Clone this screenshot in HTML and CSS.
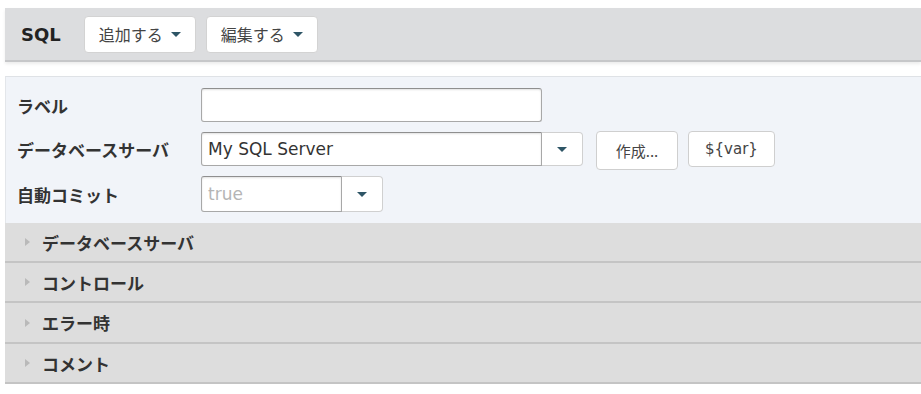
FILE: index.html
```html
<!DOCTYPE html>
<html lang="ja">
<head>
<meta charset="utf-8">
<link rel="stylesheet" href="styles.css">
</head>
<body>
<div class="page">
  <div class="toolbar">
    <span class="title">SQL</span>
    <button class="tbtn">追加する <span class="caret"></span></button>
    <button class="tbtn">編集する <span class="caret"></span></button>
  </div>

  <div class="panel">
    <div class="form">
      <div class="lbl">ラベル</div>
      <div class="ctl"><div class="input wide"></div></div>

      <div class="lbl">データベースサーバ</div>
      <div class="ctl">
        <div class="combo">
          <div class="input wide">My SQL Server</div>
          <div class="drop"><span class="caret"></span></div>
        </div>
        <button class="btn tall">作成...</button>
        <button class="btn">${var}</button>
      </div>

      <div class="lbl">自動コミット</div>
      <div class="ctl">
        <div class="combo">
          <div class="input short placeholder">true</div>
          <div class="drop"><span class="caret"></span></div>
        </div>
      </div>
    </div>
  </div>

  <div class="acc">
    <div class="acc-row"><span class="tri"></span>データベースサーバ</div>
    <div class="acc-row"><span class="tri"></span>コントロール</div>
    <div class="acc-row"><span class="tri"></span>エラー時</div>
    <div class="acc-row"><span class="tri"></span>コメント</div>
  </div>
</div>
</body>
</html>
```

FILE: styles.css
```css
html, body {
  margin: 0;
  padding: 0;
  background: #ffffff;
}
body {
  font-family: "DejaVu Sans", "Noto Sans CJK JP", sans-serif;
  color: #333333;
}
.page {
  padding: 8px 0 0 5px;
}
.toolbar {
  display: flex;
  align-items: center;
  height: 54px;
  box-sizing: border-box;
  background: #dcdddf;
  border-bottom: 2px solid #c6c7c9;
  box-shadow: 0 2px 3px rgba(0,0,0,0.08);
  padding: 0 0 0 16px;
}
.title {
  font-family: "DejaVu Sans", sans-serif;
  font-weight: bold;
  font-size: 18px;
  color: #222;
  margin-right: 22px;
}
.tbtn {
  display: flex;
  align-items: center;
  height: 37px;
  width: 112px;
  justify-content: center;
  gap: 8px;
  background: #fff;
  border: 1px solid #d3d3d3;
  border-radius: 4px;
  font-family: "Noto Sans CJK JP", sans-serif;
  font-size: 16px;
  color: #444;
  margin-left: 1px;
  margin-right: 9px;
  padding: 0;
}
.caret {
  display: inline-block;
  width: 0;
  height: 0;
  border-left: 5px solid transparent;
  border-right: 5px solid transparent;
  border-top: 5px solid #2e5566;
}
.panel {
  margin-top: 14px;
  background: #f1f4f9;
  border-top: 1px solid #dfe2e6;
  border-left: 1px solid #e3e6ea;
  padding: 11px 0 11px 11px;
}
.form {
  display: grid;
  grid-template-columns: 184px 1fr;
  row-gap: 6px;
  align-items: center;
}
.lbl {
  font-family: "Noto Sans CJK JP", sans-serif;
  font-weight: bold;
  font-size: 17px;
  color: #333;
}
.ctl {
  display: flex;
  align-items: center;
  gap: 0;
}
.input {
  box-sizing: border-box;
  height: 34px;
  background: #fff;
  border: 1px solid #a8a8a8;
  border-top-color: #8f8f8f;
  box-shadow: inset 0 1px 2px rgba(0,0,0,0.12);
  border-radius: 3px;
  font-family: "DejaVu Sans", sans-serif;
  font-size: 17px;
  line-height: 32px;
  padding: 0 6px;
  color: #333;
}
.wide { width: 341px; }
.short { width: 141px; height: 36px; line-height: 34px; }
.placeholder { color: #b5b5b5; }
.combo {
  display: flex;
}
.combo .input {
  border-radius: 3px 0 0 3px;
}
.drop {
  box-sizing: border-box;
  width: 41px;
  background: #fff;
  border: 1px solid #d0d0d0;
  border-left: none;
  border-radius: 0 4px 4px 0;
  display: flex;
  align-items: center;
  justify-content: center;
}
.btn {
  box-sizing: border-box;
  height: 36px;
  background: #fff;
  border: 1px solid #cfcfcf;
  border-radius: 4px;
  font-family: "DejaVu Sans", "Noto Sans CJK JP", sans-serif;
  font-size: 15px;
  color: #444;
  padding: 0 16px;
  margin-left: 10px;
}
.btn.tall {
  height: 39px;
  width: 82px;
  margin-left: 13px;
  padding: 0;
  font-family: "Noto Sans CJK JP", sans-serif;
  margin-top: 3px;
}
.acc-row {
  display: flex;
  align-items: center;
  height: 40px;
  box-sizing: border-box;
  background: #dddddd;
  border-bottom: 2px solid #c4c4c4;
  font-family: "Noto Sans CJK JP", sans-serif;
  font-weight: bold;
  font-size: 17px;
  color: #333;
  padding-left: 20px;
}
.acc-row:nth-child(3) {
  height: 41px;
}
.tri {
  display: inline-block;
  width: 0;
  height: 0;
  border-top: 4.5px solid transparent;
  border-bottom: 4.5px solid transparent;
  border-left: 5px solid #b9b9b9;
  margin-right: 12px;
}
```
